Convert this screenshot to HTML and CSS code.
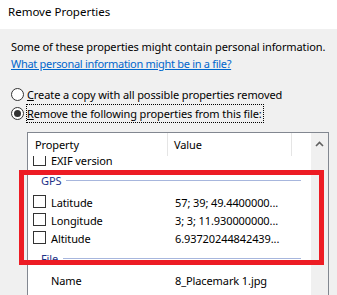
FILE: index.html
```html
<!DOCTYPE html>
<html lang="en">
<head>
    <meta charset="UTF-8">
    <title>Remove Properties</title>
    <link rel="stylesheet" href="styles.css">
</head>
<body>
    <div class="titlebar">Remove Properties</div>
    <div class="content">
        <p class="intro">Some of these properties might contain personal information.</p>
        <a class="link" href="#">What personal information might be in a file?</a>
        <div class="options">
            <div class="radio"><span class="circle"></span><span class="label"><u>C</u>reate a copy with all possible properties removed</span></div>
            <div class="radio checked"><span class="circle"></span><span class="label focus"><u>R</u>emove the following properties from this file:</span></div>
        </div>
        <div class="list">
            <div class="list-main">
                <div class="list-head">
                    <div class="col-prop">Property</div>
                    <div class="col-val">Value</div>
                    <div class="col-rest"></div>
                </div>
                <div class="list-body">
                    <div class="rows">
                        <div class="row"><span class="check"></span><span class="name">EXIF version</span><span class="value"></span></div>
                        <div class="group"><span class="group-title">GPS</span><span class="group-line"></span></div>
                        <div class="row"><span class="check"></span><span class="name">Latitude</span><span class="value">57; 39; 49.4400000...</span></div>
                        <div class="row"><span class="check"></span><span class="name">Longitude</span><span class="value">3; 3; 11.930000000...</span></div>
                        <div class="row"><span class="check"></span><span class="name">Altitude</span><span class="value">6.93720244842439...</span></div>
                        <div class="group"><span class="group-title">File</span><span class="group-line"></span></div>
                        <div class="row"><span class="nocheck"></span><span class="name">Name</span><span class="value">8_Placemark 1.jpg</span></div>
                        <div class="row"><span class="nocheck"></span><span class="name">Item type</span><span class="value">JPG File</span></div>
                    </div>
                </div>
            </div>
            <div class="scrollbar">
                <svg width="17" height="17" viewBox="0 0 17 17"><path d="M5 10 L8.5 6.5 L12 10" fill="none" stroke="#606060" stroke-width="1.6"/></svg>
            </div>
        </div>
    </div>
    <div class="highlight"></div>
</body>
</html>
```

FILE: styles.css
```css
/* Remove Properties dialog */
body{
    margin: 0;
    width: 337px;
    height: 295px;
    overflow: hidden;
    position: relative;
    background: #f0f0f0;
    font-family: "Noto Sans", "Open Sans", sans-serif;
    font-size: 11px;
    letter-spacing: -0.1px;
    color: #000;
}
.titlebar{
    height: 29px;
    padding: 0 0 5px 8px;
    box-sizing: border-box;
    line-height: 24px;
    font-size: 11.5px;
    letter-spacing: 0;
    background: #fff;
}
.content{
    padding: 10px 0 0 11px;
}
.intro{
    margin: 0;
    line-height: 16px;
    white-space: nowrap;
}
.link{
    display: block;
    margin-top: 1px;
    line-height: 16px;
    color: #0066cc;
    text-decoration: underline;
    letter-spacing: -0.3px;
    width: max-content;
}
.options{
    margin-top: 13px;
}
.radio{
    height: 19px;
    display: flex;
    align-items: center;
}
.circle{
    width: 13px;
    height: 13px;
    box-sizing: border-box;
    border: 1px solid #333;
    border-radius: 50%;
    background: #fff;
    display: flex;
    align-items: center;
    justify-content: center;
    margin-right: 3px;
}
.checked .circle::after{
    content: "";
    width: 7px;
    height: 7px;
    border-radius: 50%;
    background: #333;
}
.label{
    line-height: 17px;
    padding-right: 1px;
}
.focus{
    outline: 1px dotted #000;
}
.list{
    margin: 9px 0 0 16px;
    width: 302px;
    height: 200px;
    box-sizing: border-box;
    border: 1px solid #828790;
    background: #fff;
    display: flex;
}
.list-main{
    flex: 1;
    display: flex;
    flex-direction: column;
}
.list-head{
    height: 23px;
    display: flex;
    line-height: 23px;
    background: #fff;
    position: relative;
    z-index: 1;
}
.col-prop{
    width: 140px;
    padding-left: 7px;
    box-sizing: border-box;
    border-right: 1px solid #e5e5e5;
}
.col-val{
    width: 124px;
    padding-left: 6px;
    box-sizing: border-box;
    border-right: 1px solid #e5e5e5;
}
.col-rest{
    flex: 1;
}
.list-body{
    flex: 1;
    overflow: hidden;
}
.rows{
    margin-top: -5px;
}
.row{
    height: 18px;
    display: flex;
    align-items: center;
}
.check{
    width: 13px;
    height: 13px;
    box-sizing: border-box;
    border: 1px solid #333;
    background: #fff;
    margin: -1px 5px 0 5px;
}
.nocheck{
    width: 13px;
    margin: 0 5px;
}
.name{
    width: 124px;
}
.value{
    flex: 1;
}
.group{
    height: 24px;
    display: flex;
    align-items: center;
    padding: 0 10px 1px 13px;
    box-sizing: border-box;
}
.group-title{
    color: #1e3287;
    margin-right: 5px;
}
.group-line{
    flex: 1;
    height: 1px;
    background: #a7b6dd;
}
.scrollbar{
    width: 17px;
    background: #f0f0f0;
}
.scrollbar svg{
    display: block;
    margin-top: 3px;
}
/* red annotation frame */
.highlight{
    position: absolute;
    left: 19px;
    top: 170px;
    width: 305px;
    height: 95px;
    box-sizing: border-box;
    border: 5px solid #ed1c24;
}
```
